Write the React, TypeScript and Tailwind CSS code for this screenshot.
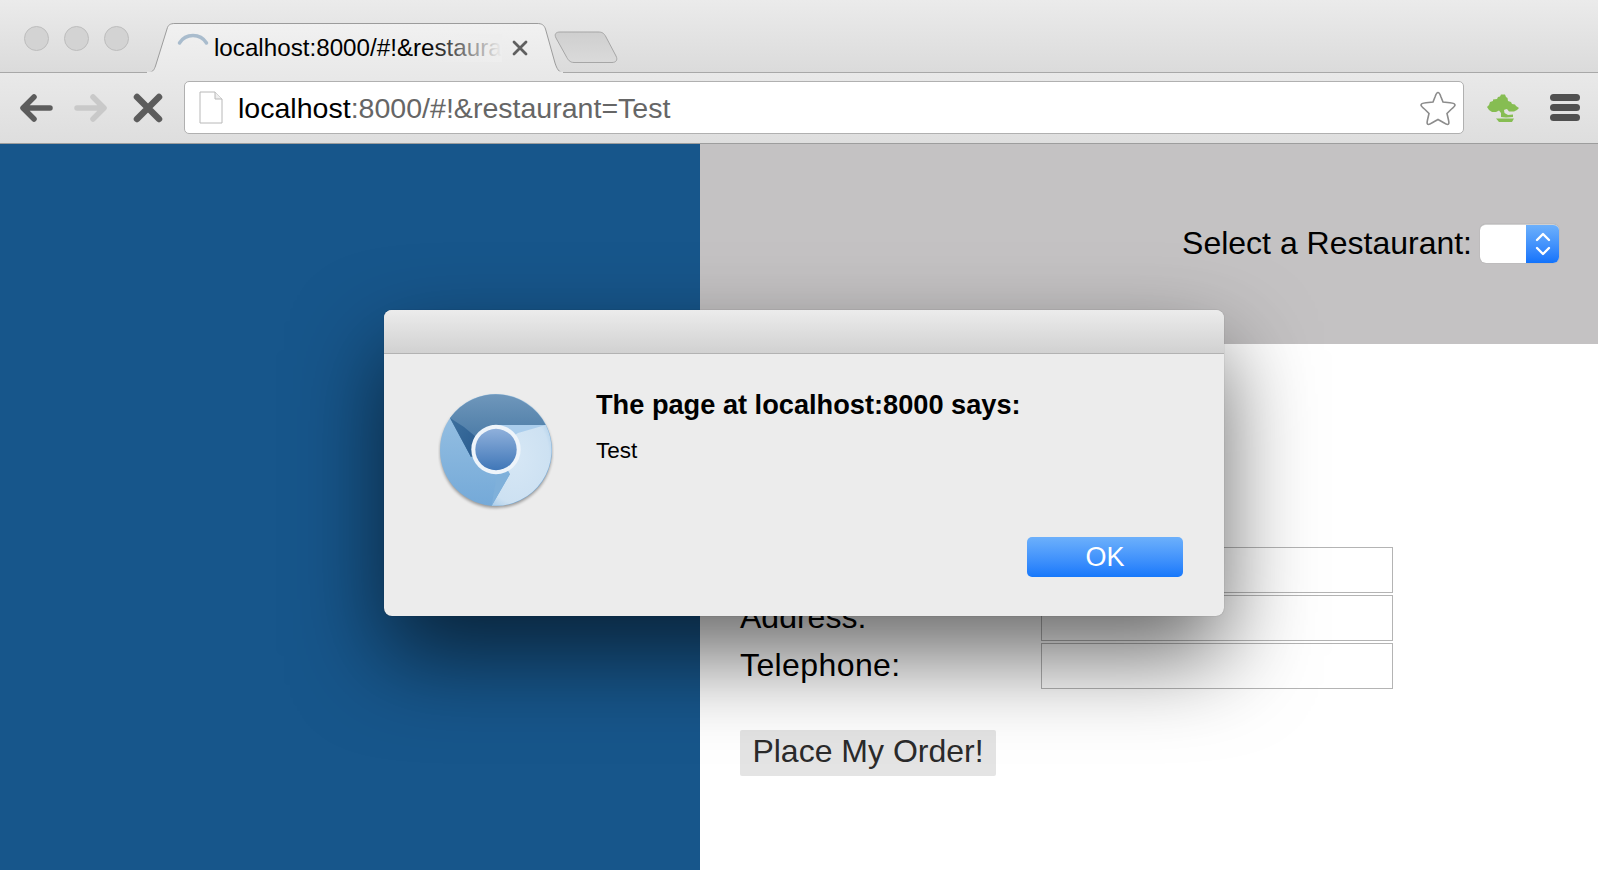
import React from "react";

const Arrow = ({ flip, color }: { flip?: boolean; color: string }) => (
  <svg width="34" height="30" viewBox="0 0 34 30" style={{ transform: flip ? "scaleX(-1)" : undefined }}>
    <path d="M15 4 L4 15 L15 26 M5 15 H31" fill="none" stroke={color} strokeWidth="5.5" strokeLinecap="round" strokeLinejoin="round" />
  </svg>
);

const ChromiumLogo = () => (
  <svg width="116" height="118" viewBox="0 0 116 118" className="shrink-0">
    <defs>
      <radialGradient id="lightSeg" cx="0.4" cy="0.4" r="0.75">
        <stop offset="0" stopColor="#d6e7f5" />
        <stop offset="0.75" stopColor="#cde1f2" />
        <stop offset="1" stopColor="#a3c8e7" />
      </radialGradient>
      <linearGradient id="topSeg" x1="0" y1="0" x2="0" y2="1">
        <stop offset="0" stopColor="#6f97bb" />
        <stop offset="1" stopColor="#3d709e" />
      </linearGradient>
      <linearGradient id="leftSeg" x1="0" y1="0" x2="0" y2="1">
        <stop offset="0" stopColor="#9cc4e4" />
        <stop offset="1" stopColor="#74a9d8" />
      </linearGradient>
      <linearGradient id="core" x1="0" y1="0" x2="0" y2="1">
        <stop offset="0" stopColor="#8fb0db" />
        <stop offset="1" stopColor="#4077b8" />
      </linearGradient>
      <linearGradient id="wedge" x1="0" y1="0" x2="1" y2="1">
        <stop offset="0" stopColor="#3d709e" />
        <stop offset="1" stopColor="#2a5c90" />
      </linearGradient>
      <filter id="logoShadow" x="-10%" y="-10%" width="120%" height="120%">
        <feGaussianBlur stdDeviation="1.5" />
      </filter>
    </defs>
    <circle cx="58" cy="59" r="56" fill="#000" opacity="0.35" filter="url(#logoShadow)" />
    <circle cx="58" cy="57" r="56" fill="url(#leftSeg)" />
    <path d="M12 25 A56 56 0 0 1 107.7 32 L54 32 L58 57 L33 64 Z" fill="url(#topSeg)" />
    <path d="M12 25 L33 64 L38 44 L26 34 Z" fill="url(#wedge)" />
    <path d="M107.7 32 A56 56 0 0 1 53.7 112.7 L72 81 L58 57 L54 32 Z" fill="url(#lightSeg)" />
    <path d="M107.7 32 L80 40 L72 45 L60 32 L54 32 Z" fill="#aacdec" />
    <path d="M53.7 112.7 L72 81 L59 80 Z" fill="#7fb0da" />
    <circle cx="58" cy="56.5" r="24.7" fill="#eef4fa" />
    <circle cx="58" cy="56.5" r="20.7" fill="url(#core)" />
  </svg>
);

const Tree = () => (
  <svg width="34" height="30" viewBox="0 0 34 30">
    <g fill="#86bd52">
      <path d="M1 14 L3 12 L4 9 L7 8 L7 6.5 L11 6 L12 4 L14 3.5 L15 1.5 L19 1.5 L20 4 L21.5 5 L22 8 L25 9 L26 11 L29 11.5 L30 13 L33 15 L31 17 L28 18.5 L23 18.5 L21 16 L19 16.5 L18 17 L18.5 20 L22 22 L27 21.5 L27 24 L20 24.5 L15 24 L15 20 L13 17.5 L10 19 L6 19 L3 17 Z" />
      <path d="M10 25.5 H28 L26 29 H13 Z" />
    </g>
  </svg>
);

const Star = () => (
  <svg width="36" height="36" viewBox="0 0 36 36">
    <path d="M18 2.5 C19.5 2.5 20 4 21 7 L23 12 L30 12.7 C33.5 13 35 13.5 35 15 C35 16.2 33.5 17.5 31 19.5 L27 23.5 L28.5 30 C29.2 33 29 34.5 27.6 34.5 C26.5 34.5 25 33.5 22.5 32 L18 29.5 L13.5 32 C11 33.5 9.5 34.5 8.4 34.5 C7 34.5 6.8 33 7.5 30 L9 23.5 L5 19.5 C2.5 17.5 1 16.2 1 15 C1 13.5 2.5 13 6 12.7 L13 12 L15 7 C16 4 16.5 2.5 18 2.5 Z" fill="#fff" stroke="#8c8c8c" strokeWidth="1.6" />
  </svg>
);

export default function App() {
  return (
    <div className="relative h-[870px] w-[1598px] overflow-hidden bg-white [font-family:'Liberation_Sans',Arial,sans-serif]">
      {/* Tab strip */}
      <div className="relative flex h-[72px] items-start bg-gradient-to-b from-[#ebebeb] to-[#dbdbdb] border-b border-[#a8a8a8] box-content">
        <div className="mt-[26px] ml-[24px] flex gap-[15px]">
          <div className="h-[25px] w-[25px] rounded-full border border-[#bdbdbd] bg-[#d3d3d3]" />
          <div className="h-[25px] w-[25px] rounded-full border border-[#bdbdbd] bg-[#d3d3d3]" />
          <div className="h-[25px] w-[25px] rounded-full border border-[#bdbdbd] bg-[#d3d3d3]" />
        </div>
        <div className="relative mt-[23px] ml-[18px] flex h-[50px] w-[416px] shrink-0 items-start">
          <svg width="416" height="50" viewBox="0 0 416 50" className="absolute inset-0">
            <defs>
              <linearGradient id="tabFill" x1="0" y1="0" x2="0" y2="1">
                <stop offset="0" stopColor="#f1f1f1" />
                <stop offset="1" stopColor="#e9e9e9" />
              </linearGradient>
            </defs>
            <path d="M0 49.5 C6 49.5 7 47 8.5 43 L20 6 C21 2 23 0.5 28 0.5 H390 C395 0.5 397 2 398.5 6 L408 40 C410 46 412 49.5 416 49.5" fill="url(#tabFill)" stroke="#9c9c9c" strokeWidth="1" />
            <path d="M0 49.5 H416" stroke="#e9e9e9" strokeWidth="2" />
            <path d="M32.5 20 A16 16 0 0 1 59.5 20" fill="none" stroke="#a9bccd" strokeWidth="3.5" strokeLinecap="round" />
          </svg>
          <div className="relative mt-[11px] ml-[67px] h-[28px] w-[288px] overflow-hidden whitespace-nowrap text-[24.2px] leading-[28px] text-black">
            localhost:8000/#!&amp;restaurant=Test
            <div className="absolute inset-y-0 right-0 w-[75px] bg-gradient-to-r from-transparent to-[#eeeeee]" />
          </div>
          <svg width="16" height="16" viewBox="0 0 16 16" className="relative mt-[17px] ml-[10px]">
            <path d="M2 2 L14 14 M14 2 L2 14" stroke="#5f5f5f" strokeWidth="2.8" strokeLinecap="round" />
          </svg>
        </div>
        <svg width="66" height="34" viewBox="0 0 66 34" className="mt-[31px] -ml-[9px]">
          <defs>
            <linearGradient id="newTab" x1="0" y1="0" x2="0" y2="1">
              <stop offset="0" stopColor="#cfcfcf" />
              <stop offset="1" stopColor="#dadada" />
            </linearGradient>
          </defs>
          <path d="M6 1 H44 C48 1 50 2 52 6 L62 25 C64 29 62 31.5 58 31.5 H20 C16 31.5 14 29 12 25 L2 7 C0 3 2 1 6 1 Z" fill="url(#newTab)" stroke="#a6a6a6" strokeWidth="1" />
        </svg>
      </div>

      {/* Toolbar */}
      <div className="flex h-[71px] items-center border-b border-[#9d9d9d] bg-gradient-to-b from-[#e9e9e9] to-[#dedede] pb-[1px]">
        <div className="ml-[19px] flex w-[165px] items-center">
          <Arrow color="#5c5c5c" />
          <div className="ml-[21px]"><Arrow flip color="#c9c9c9" /></div>
          <svg width="30" height="30" viewBox="0 0 30 30" className="ml-[25px]">
            <path d="M4 4 L26 26 M26 4 L4 26" stroke="#5c5c5c" strokeWidth="6.5" strokeLinecap="round" />
          </svg>
        </div>
        <div className="flex h-[53px] w-[1280px] items-center rounded-[5px] border border-[#b0b0b0] bg-white">
          <svg width="24" height="33" viewBox="0 0 24 33" className="ml-[14px] shrink-0">
            <path d="M1 1 H16 L23 8 V32 H1 Z" fill="#fff" stroke="#b8b8b8" strokeWidth="1" />
            <path d="M16 1 V8 H23" fill="#eee" stroke="#b8b8b8" strokeWidth="1" />
          </svg>
          <span className="ml-[15px] mt-[2px] whitespace-nowrap text-[28.55px] text-black">
            localhost<span className="text-[#666]">:8000/#!&amp;restaurant=Test</span>
          </span>
          <div className="ml-auto mr-[7px]"><Star /></div>
        </div>
        <div className="ml-[22px]"><Tree /></div>
        <div className="ml-[30px] flex flex-col gap-[3.5px]">
          <div className="h-[6.5px] w-[30px] rounded-full bg-[#505050]" />
          <div className="h-[6.5px] w-[30px] rounded-full bg-[#505050]" />
          <div className="h-[6.5px] w-[30px] rounded-full bg-[#505050]" />
        </div>
      </div>

      {/* Page */}
      <div className="flex h-[726px]">
        <div className="w-[700px] shrink-0 bg-[#17568b]" />
        <div className="flex-1">
          <div className="flex h-[200px] items-start justify-end bg-[#c4c2c3] pt-[80px] pr-[39px]">
            <span className="mt-[-1px] text-[32px] leading-[40px] text-black whitespace-nowrap">Select a Restaurant:</span>
            <div className="ml-[8px] flex h-[39px] w-[79px] overflow-hidden rounded-[6px] border-t border-[#d0d0d0] bg-white shadow-[0_0_1px_rgba(0,0,0,0.3)]">
              <div className="w-[46px]" />
              <div className="flex flex-1 items-center justify-center bg-gradient-to-b from-[#6cb0fb] to-[#1273fb]">
                <svg width="18" height="28" viewBox="0 0 18 28">
                  <path d="M3 10 L9 4 L15 10 M3 18 L9 24 L15 18" fill="none" stroke="#fff" strokeWidth="2.4" strokeLinecap="round" strokeLinejoin="round" />
                </svg>
              </div>
            </div>
          </div>
          <div className="flex flex-col items-start pt-[203px] pl-[40px]">
            <div className="flex flex-col gap-[2px]">
              <div className="flex h-[46px] items-center"><span className="w-[301px] pb-[2px] text-[32px] text-black">Name:</span><input className="h-[46px] w-[352px] border border-[#b4b4b4] bg-white" /></div>
              <div className="flex h-[46px] items-center"><span className="w-[301px] pb-[2px] text-[32px] text-black">Address:</span><input className="h-[46px] w-[352px] border border-[#b4b4b4] bg-white" /></div>
              <div className="flex h-[46px] items-center"><span className="w-[301px] pb-[2px] text-[32px] tracking-[0.4px] text-black">Telephone:</span><input className="h-[46px] w-[352px] border border-[#b4b4b4] bg-white" /></div>
            </div>
            <button className="mt-[41px] h-[46px] w-[256px] rounded-[2px] bg-[#e4e4e4] pb-[4px] text-[32px] leading-[42px] text-[#2b2b2b]">Place My Order!</button>
          </div>
        </div>
      </div>

      {/* Dialog */}
      <div className="absolute left-[384px] top-[310px] flex h-[306px] w-[840px] flex-col overflow-hidden rounded-[8px] bg-[#ececec] shadow-[0_0_1px_rgba(0,0,0,0.4),0_40px_90px_rgba(0,0,0,0.6)]">
        <div className="h-[44px] shrink-0 border-b border-[#b2b2b2] bg-gradient-to-b from-[#ececec] to-[#d1d1d1]" />
        <div className="flex flex-1 flex-col justify-between pb-[39px]">
          <div className="flex pl-[54px] pt-[39px]">
            <ChromiumLogo />
            <div className="ml-[42px] text-black">
              <div className="mt-[-3px] text-[27.2px] font-bold leading-[30px] whitespace-nowrap">The page at localhost:8000 says:</div>
              <div className="mt-[17px] text-[22.5px] leading-[28px]">Test</div>
            </div>
          </div>
          <div className="flex justify-end pr-[41px]">
            <button className="h-[40px] w-[156px] rounded-[5px] bg-gradient-to-b from-[#6cb0fb] to-[#1578fb] text-[27px] leading-[40px] text-white">OK</button>
          </div>
        </div>
      </div>
    </div>
  );
}
